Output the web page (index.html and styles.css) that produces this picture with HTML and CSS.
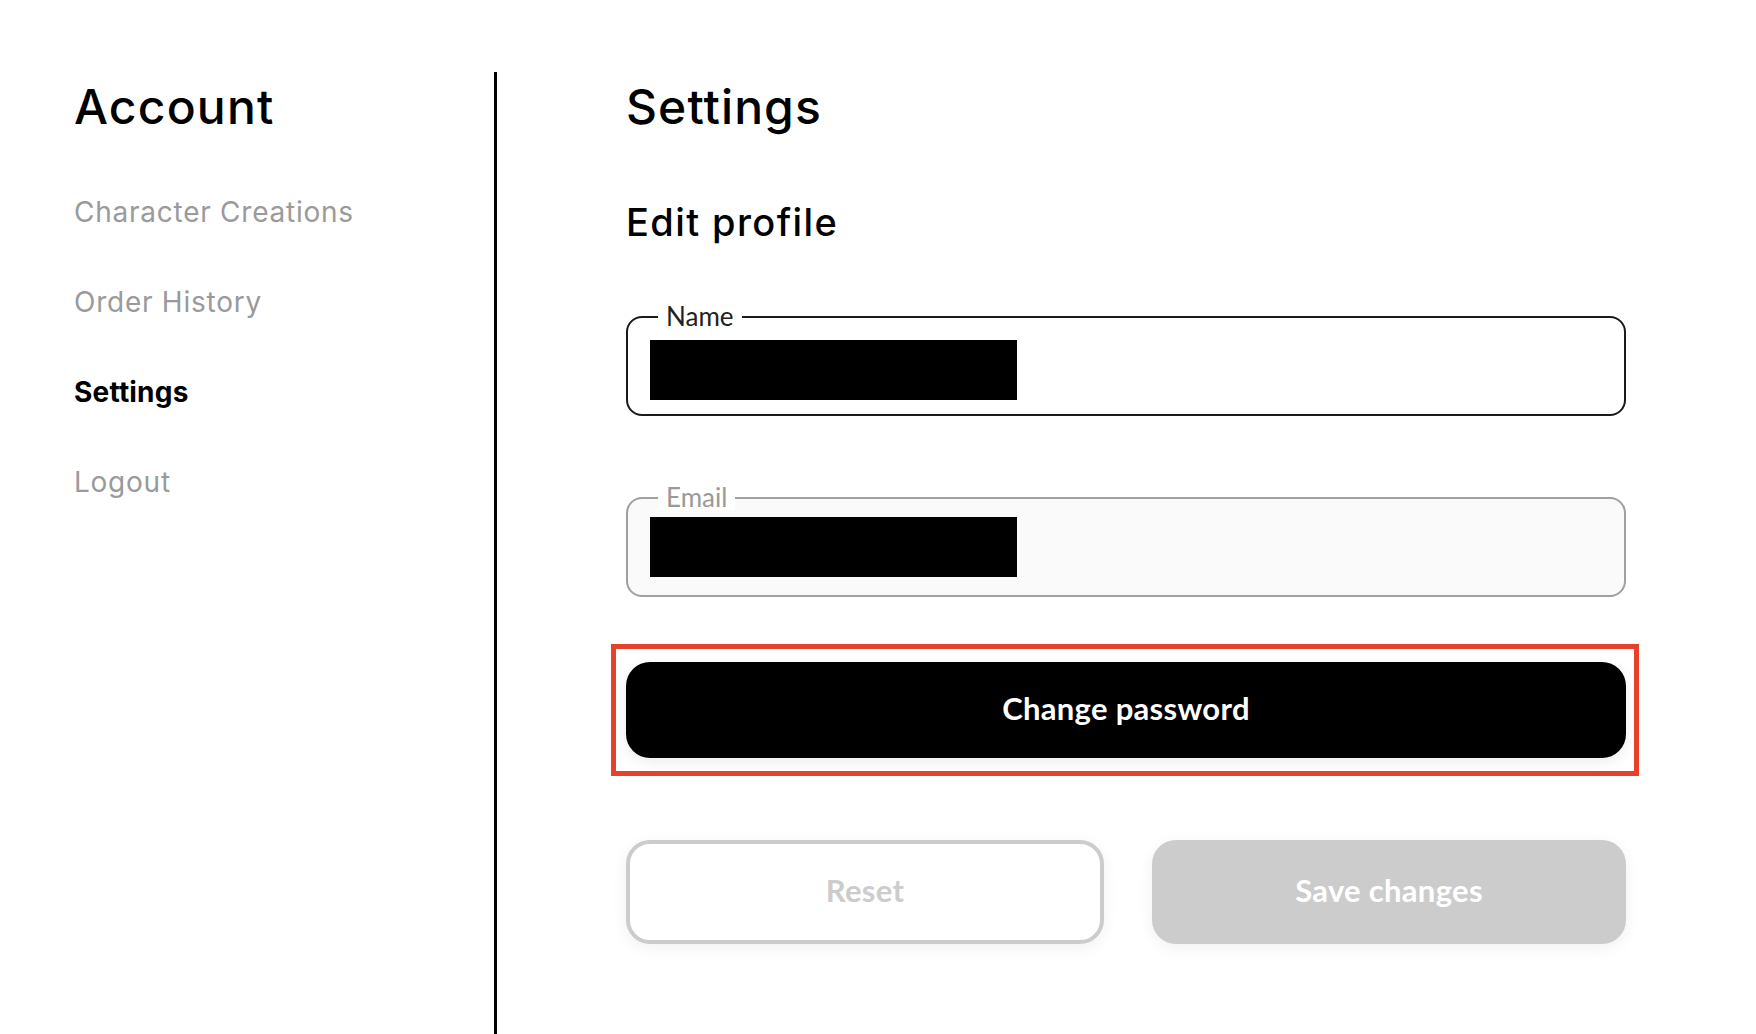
FILE: index.html
```html
<!DOCTYPE html>
<html lang="en">
<head>
<meta charset="utf-8">
<title>Account Settings</title>
<link rel="stylesheet" href="styles.css">
</head>
<body>
<div class="page">
  <aside class="sidebar">
    <h1 class="side-title">Account</h1>
    <nav class="side-nav">
      <a class="nav-item">Character Creations</a>
      <a class="nav-item">Order History</a>
      <a class="nav-item active">Settings</a>
      <a class="nav-item">Logout</a>
    </nav>
  </aside>
  <main class="content">
    <h1 class="page-title">Settings</h1>
    <h2 class="section-title">Edit profile</h2>
    <div class="field field-name">
      <span class="field-label">Name</span>
      <div class="redact"></div>
    </div>
    <div class="field field-email">
      <span class="field-label">Email</span>
      <div class="redact"></div>
    </div>
    <div class="highlight">
      <button class="btn btn-primary">Change password</button>
    </div>
    <div class="actions">
      <button class="btn btn-outline">Reset</button>
      <button class="btn btn-filled">Save changes</button>
    </div>
  </main>
</div>
</body>
</html>
```

FILE: styles.css
```css
* { box-sizing: border-box; }

html, body {
  margin: 0;
  padding: 0;
  background: #ffffff;
}

body {
  font-family: "Inter", "Noto Sans", sans-serif;
  color: #000;
}

.page {
  display: flex;
  margin-top: 72px;
  min-height: calc(100vh - 72px);
}

.sidebar {
  width: 497px;
  flex: 0 0 497px;
  padding-left: 74px;
  border-right: 3px solid #000;
}

.side-title {
  margin: 6px 0 0;
  font-size: 48px;
  line-height: 58px;
  font-weight: 500;
  letter-spacing: 1.2px;
}

.side-nav {
  display: flex;
  flex-direction: column;
  gap: 56px;
  margin-top: 59px;
}

.nav-item {
  font-size: 28px;
  line-height: 34px;
  color: #9a9a9a;
  letter-spacing: 0.75px;
  text-decoration: none;
}

.nav-item.active {
  color: #000;
  font-weight: 700;
  letter-spacing: 0.2px;
}

.content {
  width: 1129px;
  padding-left: 129px;
}

.page-title {
  margin: 6px 0 0;
  font-size: 48px;
  line-height: 58px;
  font-weight: 500;
  letter-spacing: 1.1px;
}

.section-title {
  margin: 63px 0 0;
  font-size: 38px;
  line-height: 46px;
  font-weight: 500;
  letter-spacing: 1.4px;
}

.field {
  position: relative;
  width: 1000px;
  height: 100px;
  border-radius: 16px;
  padding: 0 22px;
}

.field-name {
  margin-top: 71px;
  border: 2px solid #1a1a1a;
  padding-top: 22px;
  background: #fff;
}

.field-email {
  margin-top: 81px;
  border: 2px solid #a0a0a0;
  padding-top: 18px;
  background: #fafafa;
}

.field-label {
  position: absolute;
  top: -15px;
  left: 30px;
  padding: 0 8px 0 8px;
  background: #fff;
  font-family: "Lato", "Noto Sans", sans-serif;
  font-size: 26px;
  line-height: 26px;
  color: #222;
}

.field-email .field-label {
  color: #999;
}

.redact {
  width: 367px;
  height: 60px;
  background: #000;
}

.highlight {
  position: relative;
  width: 1000px;
  margin-top: 65px;
}

.highlight::after {
  content: "";
  position: absolute;
  top: -18px;
  bottom: -18px;
  left: -15px;
  right: -13px;
  border: 5px solid #e8412b;
  pointer-events: none;
}

.btn {
  display: flex;
  align-items: center;
  justify-content: center;
  padding: 0 0 4px;
  font-family: "Lato", "Noto Sans", sans-serif;
  font-weight: 700;
  font-size: 31px;
  letter-spacing: 0.3px;
  border: none;
  cursor: pointer;
}

.btn-primary {
  width: 100%;
  height: 96px;
  border-radius: 24px;
  background: #000;
  color: #fff;
  box-shadow: 0 4px 14px rgba(0, 0, 0, 0.08);
}

.actions {
  display: grid;
  grid-template-columns: 478px 1fr;
  gap: 48px;
  width: 1000px;
  margin-top: 82px;
}

.btn-outline {
  height: 104px;
  border-radius: 24px;
  background: #fff;
  border: 4px solid #cccccc;
  color: #cccccc;
  box-shadow: 0 4px 16px rgba(0, 0, 0, 0.06);
}

.btn-filled {
  height: 104px;
  border-radius: 24px;
  background: #cccccc;
  color: #fff;
  box-shadow: 0 4px 16px rgba(0, 0, 0, 0.06);
}
```
